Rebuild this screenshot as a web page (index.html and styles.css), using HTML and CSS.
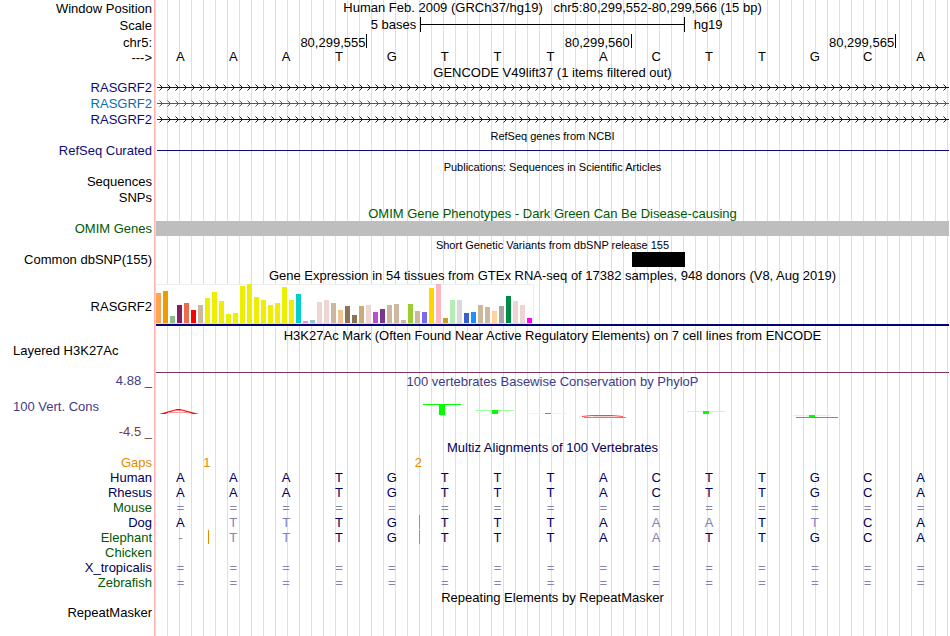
FILE: index.html
```html
<!DOCTYPE html>
<html lang="en">
<head>
<meta charset="utf-8">
<title>Genome Browser chr5:80,299,552-80,299,566</title>
<link rel="stylesheet" href="styles.css">
</head>
<body>
<main class="browser">
  <div class="row head"><div class="label">Window Position</div><div class="title">Human Feb. 2009 (GRCh37/hg19) &nbsp; chr5:80,299,552-80,299,566 (15 bp)</div></div>
  <div class="row head scale-row"><div class="label">Scale</div>
    <div class="cols"><span class="scale-text">5 bases</span><span class="scale-bar"></span><span class="scale-db">hg19</span></div></div>
  <div class="row head"><div class="label">chr5:</div>
    <div class="cols"><span class="coord first">80,299,555</span><span class="coord">80,299,560</span><span class="coord">80,299,565</span></div></div>
  <table class="bases reference">
    <tr><th>---&gt;</th><td>A</td><td>A</td><td>A</td><td>T</td><td>G</td><td>T</td><td>T</td><td>T</td><td>A</td><td>C</td><td>T</td><td>T</td><td>G</td><td>C</td><td>A</td></tr>
  </table>

  <div class="row tight"><div class="title">GENCODE V49lift37 (1 items filtered out)</div></div>
  <div class="row navy"><div class="label">RASGRF2</div><svg class="intron" aria-hidden="true">
    <defs><pattern id="arrow-navy" x="2" width="8" height="15" patternUnits="userSpaceOnUse"><path d="M1.5 4.5L4.5 7.5L1.5 10.5" fill="none" stroke="#0c0c78"/></pattern>
    <pattern id="arrow-blue" x="2" width="8" height="15" patternUnits="userSpaceOnUse"><path d="M1.5 4.5L4.5 7.5L1.5 10.5" fill="none" stroke="#0c6cb0"/></pattern></defs>
    <rect x="1" y="7" width="100%" height="1" fill="#0c0c78"/><rect x="1" width="100%" height="15" fill="url(#arrow-navy)"/></svg></div>
  <div class="row blue"><div class="label">RASGRF2</div><svg class="intron" aria-hidden="true"><rect x="1" y="7" width="100%" height="1" fill="#0c6cb0"/><rect x="1" width="100%" height="15" fill="url(#arrow-blue)"/></svg></div>
  <div class="row navy"><div class="label">RASGRF2</div><svg class="intron" aria-hidden="true"><rect x="1" y="7" width="100%" height="1" fill="#0c0c78"/><rect x="1" width="100%" height="15" fill="url(#arrow-navy)"/></svg></div>

  <div class="row tight"><div class="title small">RefSeq genes from NCBI</div></div>
  <div class="row navy"><div class="label">RefSeq Curated</div><div class="line"></div></div>
  <div class="row tight"><div class="title small">Publications: Sequences in Scientific Articles</div></div>
  <div class="row"><div class="label">Sequences</div></div>
  <div class="row"><div class="label">SNPs</div></div>

  <div class="row tight green"><div class="title">OMIM Gene Phenotypes - Dark Green Can Be Disease-causing</div></div>
  <div class="row green"><div class="label">OMIM Genes</div><div class="omim"></div></div>
  <div class="row tight"><div class="title small">Short Genetic Variants from dbSNP release 155</div></div>
  <div class="row"><div class="label">Common dbSNP(155)</div><div class="cols"><span class="snp"></span></div></div>

  <div class="row"><div class="title">Gene Expression in 54 tissues from GTEx RNA-seq of 17382 samples, 948 donors (V8, Aug 2019)</div></div>
  <div class="row gtex"><div class="label">RASGRF2</div>
    <div class="gtex-track">
      <svg width="378" height="40" viewBox="0 0 378 40" role="img" aria-label="Expression by tissue" shape-rendering="crispEdges">
        <path fill="#fff" d="M0 0H378V40H0z"/>
        <path fill="none" stroke="#eee" d="M0 .5H377.5V39"/><path fill="#dcdcdc" d="M0 39H377V40H0z"/>
        <path fill="#ffa54f" d="M0 39V9h5V39"/><path fill="#ee9a00" d="M7 39V7h5V39"/><path fill="#8fbc8f" d="M14 39V32h5V39"/>
        <path fill="#8b1c62" d="M21 39V21h5V39"/><path fill="#ee6a50" d="M28 39V19h5V39"/><path fill="#f00" d="M35 39V26h5V39"/>
        <path fill="#cdb79e" d="M42 39V21h5V39"/>
        <path fill="#ee0" d="M49 39V14h5V39M56 39V8h5V39M63 39V17h5V39M70 39V30h5V39M77 39V29h5V39M84 39V2h5V39M91 39V0h5V39M98 39V13h5V39M105 39V16h5V39M112 39V21h5V39M119 39V19h5V39M126 39V3h5V39M133 39V16h5V39"/>
        <path fill="#00cdcd" d="M140 39V10h5V39"/><path fill="#ee82ee" d="M147 39V37h5V39"/><path fill="#9ac0cd" d="M154 39V36h5V39"/>
        <path fill="#eed5d2" d="M161 39V18h5V39M168 39V16h5V39"/><path fill="#cdb79e" d="M175 39V19h5V39"/><path fill="#eec591" d="M182 39V26h5V39"/>
        <path fill="#8b7355" d="M189 39V22h5V39M196 39V31h5V39"/><path fill="#cdaa7d" d="M203 39V22h5V39"/><path fill="#eed5d2" d="M210 39V21h5V39"/>
        <path fill="#b452cd" d="M217 39V28h5V39"/><path fill="#7a378b" d="M224 39V25h5V39"/>
        <path fill="#cdb79e" d="M231 39V21h5V39M238 39V20h5V39M245 39V36h5V39"/><path fill="#9acd32" d="M252 39V20h5V39"/>
        <path fill="#cdb79e" d="M259 39V27h5V39"/><path fill="#7b68ee" d="M266 39V28h5V39"/><path fill="#ffd700" d="M273 39V4h5V39"/>
        <path fill="#ffb6c1" d="M280 39V0h5V39"/><path fill="#cd9b1d" d="M287 39V34h5V39"/><path fill="#b4eeb4" d="M294 39V16h5V39"/>
        <path fill="#d9d9d9" d="M301 39V16h5V39"/><path fill="#3a5fcd" d="M308 39V29h5V39"/><path fill="#1e90ff" d="M315 39V28h5V39"/>
        <path fill="#cdb79e" d="M322 39V21h5V39M329 39V23h5V39"/><path fill="#ffd39b" d="M336 39V27h5V39"/><path fill="#a6a6a6" d="M343 39V22h5V39"/>
        <path fill="#008b45" d="M350 39V12h5V39"/><path fill="#eed5d2" d="M357 39V17h5V39M364 39V21h5V39"/><path fill="#f0f" d="M371 39V34h5V39"/>
      </svg>
    </div></div>

  <div class="row"><div class="title">H3K27Ac Mark (Often Found Near Active Regulatory Elements) on 7 cell lines from ENCODE</div></div>
  <div class="row h3k"><div class="label wide">Layered H3K27Ac</div><div class="h3k-track"></div></div>

  <div class="row phylo"><div class="label">4.88 _</div><div class="title">100 vertebrates Basewise Conservation by PhyloP</div></div>
  <div class="row phylo wiggle"><div class="wiggle-labels"><div class="label wide">100 Vert. Cons</div><div class="label low">-4.5 _</div></div>
    <svg class="conservation" viewBox="0 0 793 50" preserveAspectRatio="none" role="img" aria-label="Conservation scores">
      <path d="M3 24L21 19H24L43 24H37L26 20.5H19L9 24z" fill="#f00"/>
      <path d="M12 22.5H33" stroke="#f99"/>
      <path fill="#0f0" d="M267 14H305V15H289V25H283V15H267z"/>
      <path fill="#9f9" d="M320 20H358V21H320z"/><path fill="#0f0" d="M336 20h6v4h-6z"/>
      <path fill="#dfd" d="M373 23H411V24H373z"/><path fill="#0d3" d="M389 23h6v1h-6z"/>
      <path d="M426 26.5L436 25.5H456L467 26.5" fill="none" stroke="#f44"/><path d="M428 27.5H470" stroke="#88f"/><path d="M437 26.5H458" stroke="#fcc"/>
      <path fill="#bfb" d="M531 21H569V22H531z"/><path fill="#0f0" d="M547 21h6v3h-6z"/>
      <path fill="#cfc" d="M637 25H674V26H637z"/><path fill="#77f" d="M640 27H682V28H640z"/><path fill="#0f0" d="M653 25h6v2h-6z"/>
    </svg></div>

  <div class="row tight dark"><div class="title">Multiz Alignments of 100 Vertebrates</div></div>
  <table class="bases alignment">
    <colgroup><col class="name"><col span="15"></colgroup>
    <tr class="gaps"><th>Gaps</th><td colspan="2">1</td><td></td><td></td><td colspan="2">2</td><td colspan="9"></td></tr>
    <tr><th>Human</th><td>A</td><td>A</td><td>A</td><td>T</td><td>G</td><td>T</td><td>T</td><td>T</td><td>A</td><td>C</td><td>T</td><td>T</td><td>G</td><td>C</td><td>A</td></tr>
    <tr><th>Rhesus</th><td>A</td><td>A</td><td>A</td><td>T</td><td>G</td><td>T</td><td>T</td><td>T</td><td>A</td><td>C</td><td>T</td><td>T</td><td>G</td><td>C</td><td>A</td></tr>
    <tr class="none"><th class="alt">Mouse</th><td>=</td><td>=</td><td>=</td><td>=</td><td>=</td><td>=</td><td>=</td><td>=</td><td>=</td><td>=</td><td>=</td><td>=</td><td>=</td><td>=</td><td>=</td></tr>
    <tr><th>Dog</th><td>A</td><td class="diff">T</td><td class="diff">T</td><td>T</td><td class="insert">G</td><td>T</td><td>T</td><td>T</td><td>A</td><td class="diff">A</td><td class="diff">A</td><td>T</td><td class="diff">T</td><td>C</td><td>A</td></tr>
    <tr><th class="alt">Elephant</th><td class="diff insert">-</td><td class="diff">T</td><td class="diff">T</td><td>T</td><td class="insert">G</td><td>T</td><td>T</td><td>T</td><td>A</td><td class="diff">A</td><td>T</td><td>T</td><td>G</td><td>C</td><td>A</td></tr>
    <tr><th class="alt">Chicken</th><td colspan="15"></td></tr>
    <tr class="none"><th>X_tropicalis</th><td>=</td><td>=</td><td>=</td><td>=</td><td>=</td><td>=</td><td>=</td><td>=</td><td>=</td><td>=</td><td>=</td><td>=</td><td>=</td><td>=</td><td>=</td></tr>
    <tr class="none"><th class="alt">Zebrafish</th><td>=</td><td>=</td><td>=</td><td>=</td><td>=</td><td>=</td><td>=</td><td>=</td><td>=</td><td>=</td><td>=</td><td>=</td><td>=</td><td>=</td><td>=</td></tr>
  </table>

  <div class="row tight"><div class="title">Repeating Elements by RepeatMasker</div></div>
  <div class="row"><div class="label">RepeatMasker</div></div>
</main>
</body>
</html>
```
FILE: styles.css
```css
* { box-sizing: border-box; }

body {
  margin: 0;
  background: #fff;
  color: #000;
  font: 13px/15px "Liberation Sans", Arial, sans-serif;
}

.browser {
  min-height: 100vh;
  background-image:
    linear-gradient(#ffb4b4, #ffb4b4),
    linear-gradient(90deg, #dcdcfa 1px, transparent 1px);
  background-size: 1px 100%, 12px 100%;
  background-position: 154px 0, 167px 0;
  background-repeat: no-repeat, repeat-x;
  position: relative;
  isolation: isolate;
}

/* keeps the guide lines out of the label column */
.browser::before {
  content: "";
  position: absolute;
  z-index: -1;
  inset: 0 auto 0 0;
  width: 154px;
  background: #fff;
}

.row {
  display: grid;
  grid-template-columns: 156px minmax(0, 1fr);
  min-height: 16px;
  padding-right: 1px;
}
.row.tight { min-height: 15px; }
.row.scale-row { min-height: 18px; }

.label {
  grid-column: 1;
  padding-right: 4px;
  text-align: right;
  white-space: nowrap;
}
.label.wide {
  padding-left: 13px;
  text-align: left;
}
.head .label { padding-top: 1px; }
.scale-row .label { padding-top: 2px; }

.title {
  grid-column: 2;
  padding-top: 1px;
  line-height: 14px;
  text-align: center;
  white-space: nowrap;
}
.title.small { font-size: 11px; }
.head .title {
  padding-top: 0;
  line-height: 15px;
}

.navy { color: #0c0c78; }
.blue { color: #0c6cb0; }
.green { color: #005a00; }
.dark { color: #00005a; }

/* one column for each base in the window */
.cols {
  display: grid;
  grid-template-columns: repeat(15, minmax(0, 1fr));
}

.scale-text {
  grid-column: 1 / 6;
  padding: 1px 4px 0 0;
  text-align: right;
}
.scale-bar {
  grid-column: 6 / 11;
  height: 15px;
  margin-top: 1px;
  border: solid #000;
  border-width: 0 1px;
  background: linear-gradient(#000, #000) 0 7px / 100% 1px no-repeat;
}
.scale-db {
  grid-column: 11 / 16;
  padding: 1px 0 0 9px;
}

.coord {
  grid-column: span 5;
  height: 14px;
  padding-top: 1px;
  padding-right: 1px;
  border-right: 1px solid #000;
  text-align: right;
}
.coord.first { grid-column: 1 / 5; }

.intron {
  display: block;
  width: 100%;
  height: 15px;
}

.line {
  height: 8px;
  margin-left: 1px;
  border-bottom: 1px solid #0c0c78;
}

.omim {
  height: 15px;
  background: #bebebe;
}

.snp {
  grid-column: 10;
  height: 15px;
  background: #000;
}

.gtex { height: 44px; }
.gtex .label { align-self: center; }
.gtex-track {
  height: 42px;
  border-bottom: 2px solid #000078;
}
.gtex-track svg { display: block; }

.h3k { height: 30px; }
.h3k .label { line-height: 13px; }
.h3k-track {
  height: 29px;
  border-bottom: 1px solid #783264;
}

.phylo { color: #3c3c8c; }
.phylo > .label { line-height: 13px; }
.wiggle { height: 50px; }
.wiggle-labels {
  display: flex;
  flex-direction: column;
  justify-content: space-between;
  padding: 9px 0 1px;
}
.label.low { color: #783c3c; }
.conservation {
  display: block;
  width: 100%;
  height: 50px;
}

.bases {
  width: calc(100% - 3px);
  table-layout: fixed;
  border-collapse: collapse;
}
.bases th,
.bases td {
  height: 15px;
  padding: 0;
  font-weight: normal;
  line-height: 15px;
  text-align: center;
}
.bases th {
  width: 154px;
  padding-right: 2px;
  text-align: right;
}
.bases .name { width: 154px; }
.bases.reference td {
  line-height: 13px;
  vertical-align: top;
}

.alignment { color: #00005a; }
.alignment .alt { color: #005a00; }
.alignment .gaps { color: #e68a00; }
.alignment .diff,
.alignment .none td { color: #8282b4; }
.alignment .insert { position: relative; }
.alignment .insert::after {
  content: "";
  position: absolute;
  top: 0;
  right: -2px;
  width: 1px;
  height: 14px;
  background: #e68a00;
}
```
